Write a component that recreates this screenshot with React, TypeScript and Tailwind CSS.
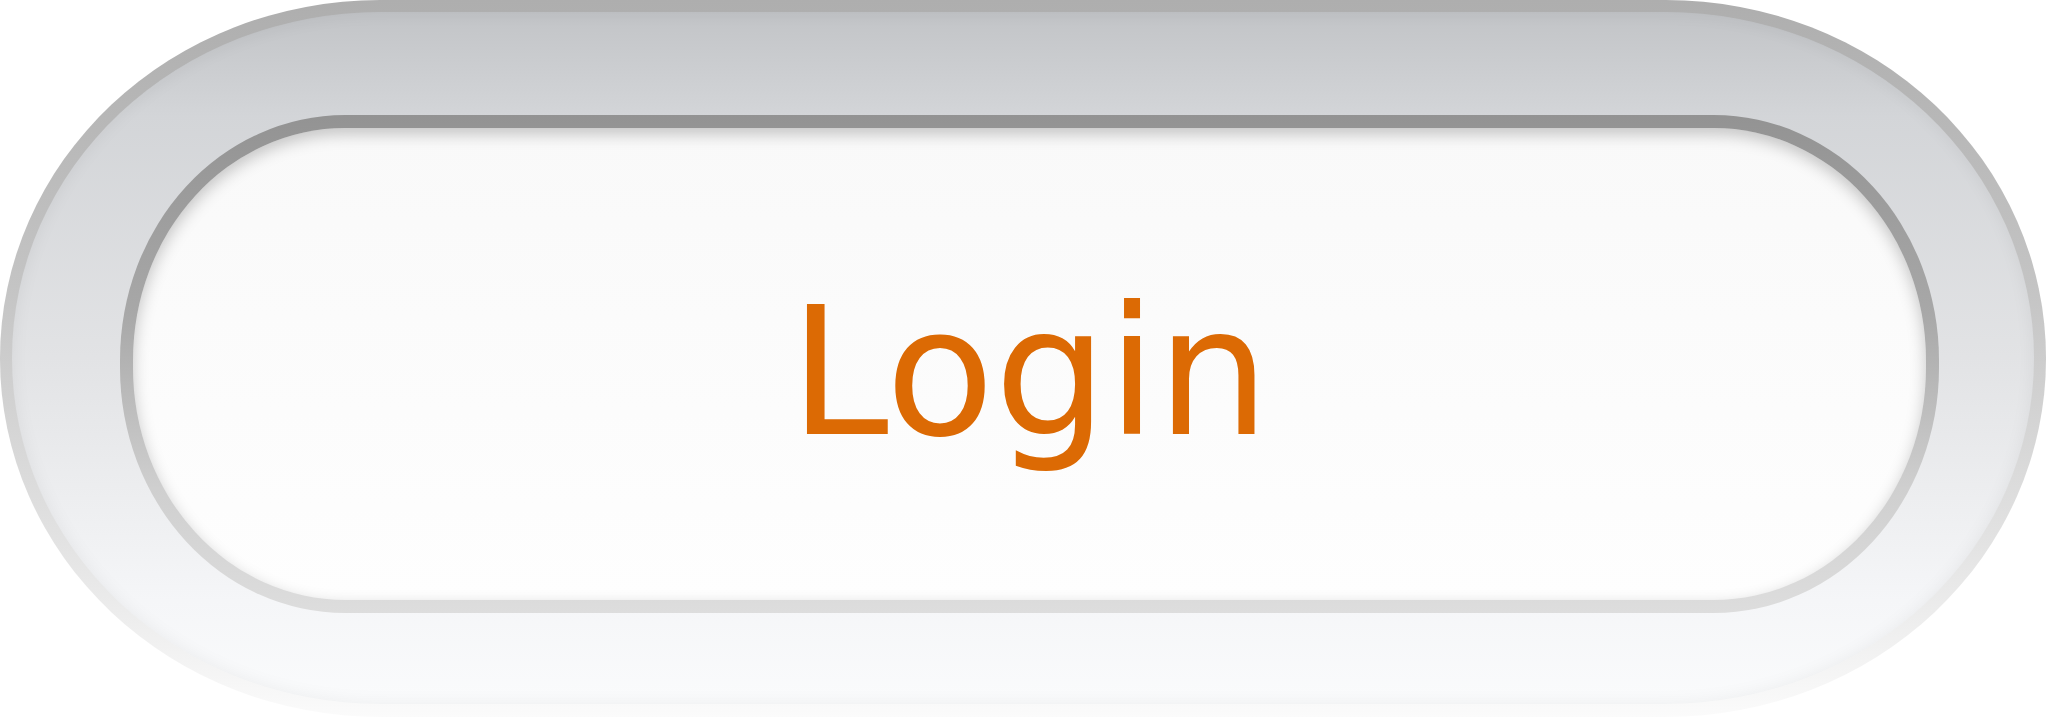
export default function App() {
  return (
    <div className="w-[2046px] h-[717px] bg-white">
      <div className="h-full w-full p-[12px] pb-[13px] rounded-[380px/358px] bg-[linear-gradient(to_bottom,#aeaeae_0%,#c4c4c4_40%,#e2e2e2_75%,#fbfbfb_100%)]">
        <div className="h-full w-full rounded-[368px/346px] bg-[linear-gradient(to_bottom,#c2c4c7_0%,#d3d5d8_15%,#e2e3e5_50%,#f5f6f8_85%,#fafbfc_100%)] shadow-[inset_0_0_18px_rgba(0,0,0,0.06)] pt-[103px] pb-[91px] pl-[108px] pr-[95px]">
          <div className="h-full w-full p-[13px] rounded-[225px/245px] bg-[linear-gradient(to_bottom,#939393_0%,#a8a8a8_40%,#cfcfcf_75%,#dddddd_100%)]">
            <div className="h-full w-full rounded-[212px/232px] bg-[linear-gradient(to_bottom,#f9f9f9,#fefefe)] shadow-[inset_0_6px_16px_rgba(0,0,0,0.22)] flex items-center justify-center">
              <span
                className="text-[#dc6a04] text-[178px] leading-none mt-[18px]"
                style={{ fontFamily: '"DejaVu Sans", sans-serif' }}
              >
                Login
              </span>
            </div>
          </div>
        </div>
      </div>
    </div>
  );
}
